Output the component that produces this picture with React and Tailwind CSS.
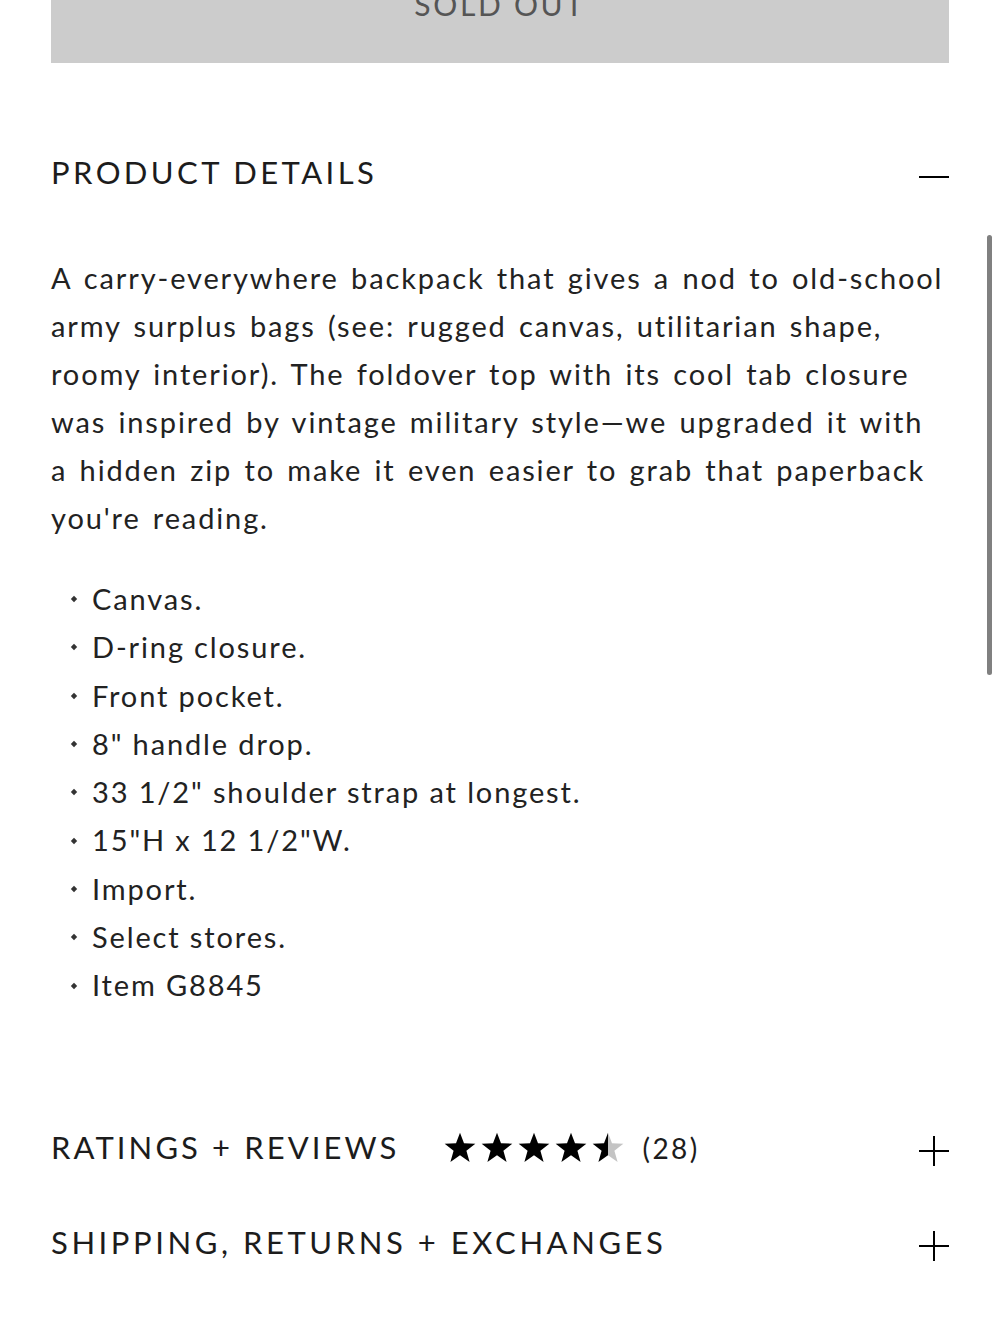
import { useState } from 'react';

const bullets = [
  'Canvas.',
  'D-ring closure.',
  'Front pocket.',
  '8" handle drop.',
  '33 1/2" shoulder strap at longest.',
  '15"H x 12 1/2"W.',
  'Import.',
  'Select stores.',
  'Item G8845',
];

function Star({ fill = 1 }) {
  // fill: 1 full, 0.5 half
  const id = fill < 1 ? 'half-star' : undefined;
  return (
    <svg width="32" height="31" viewBox="0 0 24 23">
      {id && (
        <defs>
          <linearGradient id={id} x1="0" x2="1" y1="0" y2="0">
            <stop offset="50%" stopColor="#000" />
            <stop offset="50%" stopColor="#c4c4c4" />
          </linearGradient>
        </defs>
      )}
      <polygon
        points="12,0.5 15,8.4 23.5,8.6 16.8,13.9 19.2,22.3 12,17.4 4.8,22.3 7.2,13.9 0.5,8.6 9,8.4"
        fill={id ? `url(#${id})` : '#000'}
      />
    </svg>
  );
}

function Plus() {
  return (
    <span className="relative block w-[30px] h-[30px] mt-[7px]">
      <span className="absolute left-0 right-0 top-[14px] h-[2px] bg-black" />
      <span className="absolute top-0 bottom-0 left-[14px] w-[2px] bg-black" />
    </span>
  );
}

function Minus() {
  return <span className="block w-[30px] h-[2px] bg-black mt-[10px]" />;
}

export default function App() {
  const [open] = useState(true);

  return (
    <div className="w-[1000px] h-[1333px] overflow-hidden bg-white text-[#1c1c1c] relative" style={{ fontFamily: 'Lato, "Noto Sans", sans-serif' }}>
      <div className="px-[51px]">
        <button className="w-full h-[118px] -mt-[55px] bg-[#cccccc] text-[#555] text-[30px] tracking-[0.09em] uppercase flex items-center justify-center">
          Sold Out
        </button>

        <div className="flex items-center justify-between mt-[85px] h-[48px]">
          <h2 className="text-[31px] tracking-[0.11em] uppercase">Product Details</h2>
          {open ? <Minus /> : <Plus />}
        </div>

        <p className="mt-[58px] text-[29px] leading-[48px] tracking-[1.87px] [word-spacing:3px] text-[#222]">
          A carry-everywhere backpack that gives a nod to old-school army surplus bags (see: rugged canvas, utilitarian shape, roomy interior). The foldover top with its cool tab closure was inspired by vintage military style—we upgraded it with a hidden zip to make it even easier to grab that paperback you're reading.
        </p>

        <ul className="mt-[33px] text-[29px] leading-[48.3px] tracking-[1.87px] text-[#222]">
          {bullets.map((b) => (
            <li key={b} className="flex items-center">
              <span className="w-[6px] h-[6px] rotate-45 bg-[#333] ml-[20px] mr-[15px] scale-75" />
              {b}
            </li>
          ))}
        </ul>

        <div className="flex items-center justify-between mt-[108px] h-[60px]">
          <div className="flex items-center">
            <h2 className="text-[31px] tracking-[0.1em] uppercase">Ratings + Reviews</h2>
            <div className="flex items-center gap-[5px] ml-[44px]">
              <Star />
              <Star />
              <Star />
              <Star />
              <Star fill={0.5} />
            </div>
            <span className="ml-[19px] text-[28px] tracking-[0.085em]">(28)</span>
          </div>
          <Plus />
        </div>

        <div className="flex items-center justify-between mt-[35px] h-[60px]">
          <h2 className="text-[31px] tracking-[0.115em] uppercase">Shipping, Returns + Exchanges</h2>
          <Plus />
        </div>
      </div>

      <div className="absolute right-[8px] top-[235px] w-[5px] h-[440px] rounded-full bg-[#808080]" />
    </div>
  );
}
